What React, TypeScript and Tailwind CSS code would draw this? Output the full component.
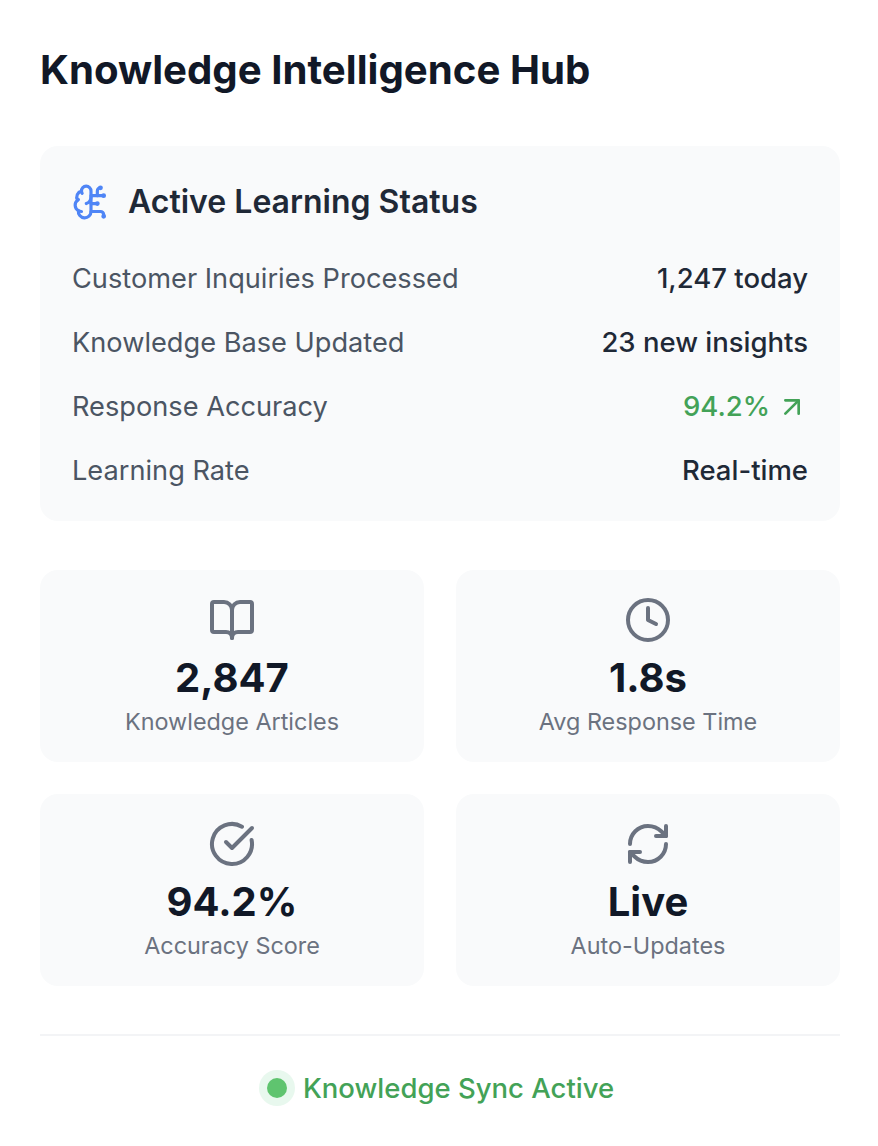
import React from 'react';
import { ArrowUpRight, BookOpen, BrainCircuit, CircleCheckBig, Clock, RefreshCw } from 'lucide-react';

const rows = [
    { label: 'Customer Inquiries Processed', value: '1,247 today' },
    { label: 'Knowledge Base Updated', value: '23 new insights' },
    { label: 'Response Accuracy', value: '94.2%', trend: true },
    { label: 'Learning Rate', value: 'Real-time' },
];

const stats = [
    { icon: BookOpen, value: '2,847', label: 'Knowledge Articles' },
    { icon: Clock, value: '1.8s', label: 'Avg Response Time' },
    { icon: CircleCheckBig, value: '94.2%', label: 'Accuracy Score' },
    { icon: RefreshCw, value: 'Live', label: 'Auto-Updates' },
];

const StatusRow: React.FC<{ label: string; value: string; trend?: boolean }> = ({ label, value, trend }) => (
    <div className="flex h-[64px] items-center justify-between">
        <span className="text-[27.2px] text-[#4b5563]">{label}</span>
        {trend ? (
            <span className="flex items-center gap-[6px] text-[27.5px] font-medium text-[#43a257]">
                {value}
                <ArrowUpRight className="h-[32px] w-[32px]" strokeWidth={2} />
            </span>
        ) : (
            <span className="text-[27.5px] font-medium text-[#1f2937]">{value}</span>
        )}
    </div>
);

const StatCard: React.FC<{ icon: React.ElementType; value: string; label: string }> = ({ icon: Icon, value, label }) => (
    <div className="flex h-[192px] flex-col items-center rounded-[18px] bg-[#f9fafb] pt-[26px]">
        <Icon className="h-[48px] w-[48px] text-[#6b7280]" strokeWidth={2} />
        <div className="mt-[9px] text-[40px] leading-[50px] font-bold text-[#111827]">{value}</div>
        <div className="mt-[3px] text-[23.4px] leading-[32px] text-[#6b7280]">{label}</div>
    </div>
);

export default function App() {
    return (
        <div className="min-h-[1146px] bg-white pt-[45px] pr-[38px] pl-[40px] font-['Inter',sans-serif]">
            <h1 className="text-[40.2px] leading-[50px] font-bold text-[#111827]">Knowledge Intelligence Hub</h1>

            <section className="mt-[51px] rounded-[18px] bg-[#f9fafb] px-[32px] pt-[32px] pb-[18px]">
                <div className="mb-[21px] flex items-center gap-[18px]">
                    <BrainCircuit className="h-[38px] w-[38px] text-[#4f85f6]" strokeWidth={2} />
                    <h2 className="text-[32px] leading-[48px] font-semibold text-[#1f2937]">Active Learning Status</h2>
                </div>
                {rows.map(row => (
                    <StatusRow key={row.label} {...row} />
                ))}
            </section>

            <div className="mt-[49px] grid grid-cols-2 gap-[32px]">
                {stats.map(stat => (
                    <StatCard key={stat.label} {...stat} />
                ))}
            </div>

            <footer className="mt-[48px] flex items-center justify-center gap-[8px] border-t-2 border-[#f3f4f6] pt-[34px] pr-[7px]">
                <span className="flex h-[36px] w-[36px] items-center justify-center rounded-full bg-[#e8f8ee]">
                    <span className="h-[20px] w-[20px] rounded-full bg-[#5fc46f]" />
                </span>
                <span className="text-[27.5px] leading-[36px] font-medium text-[#43a257]">Knowledge Sync Active</span>
            </footer>
        </div>
    );
}
